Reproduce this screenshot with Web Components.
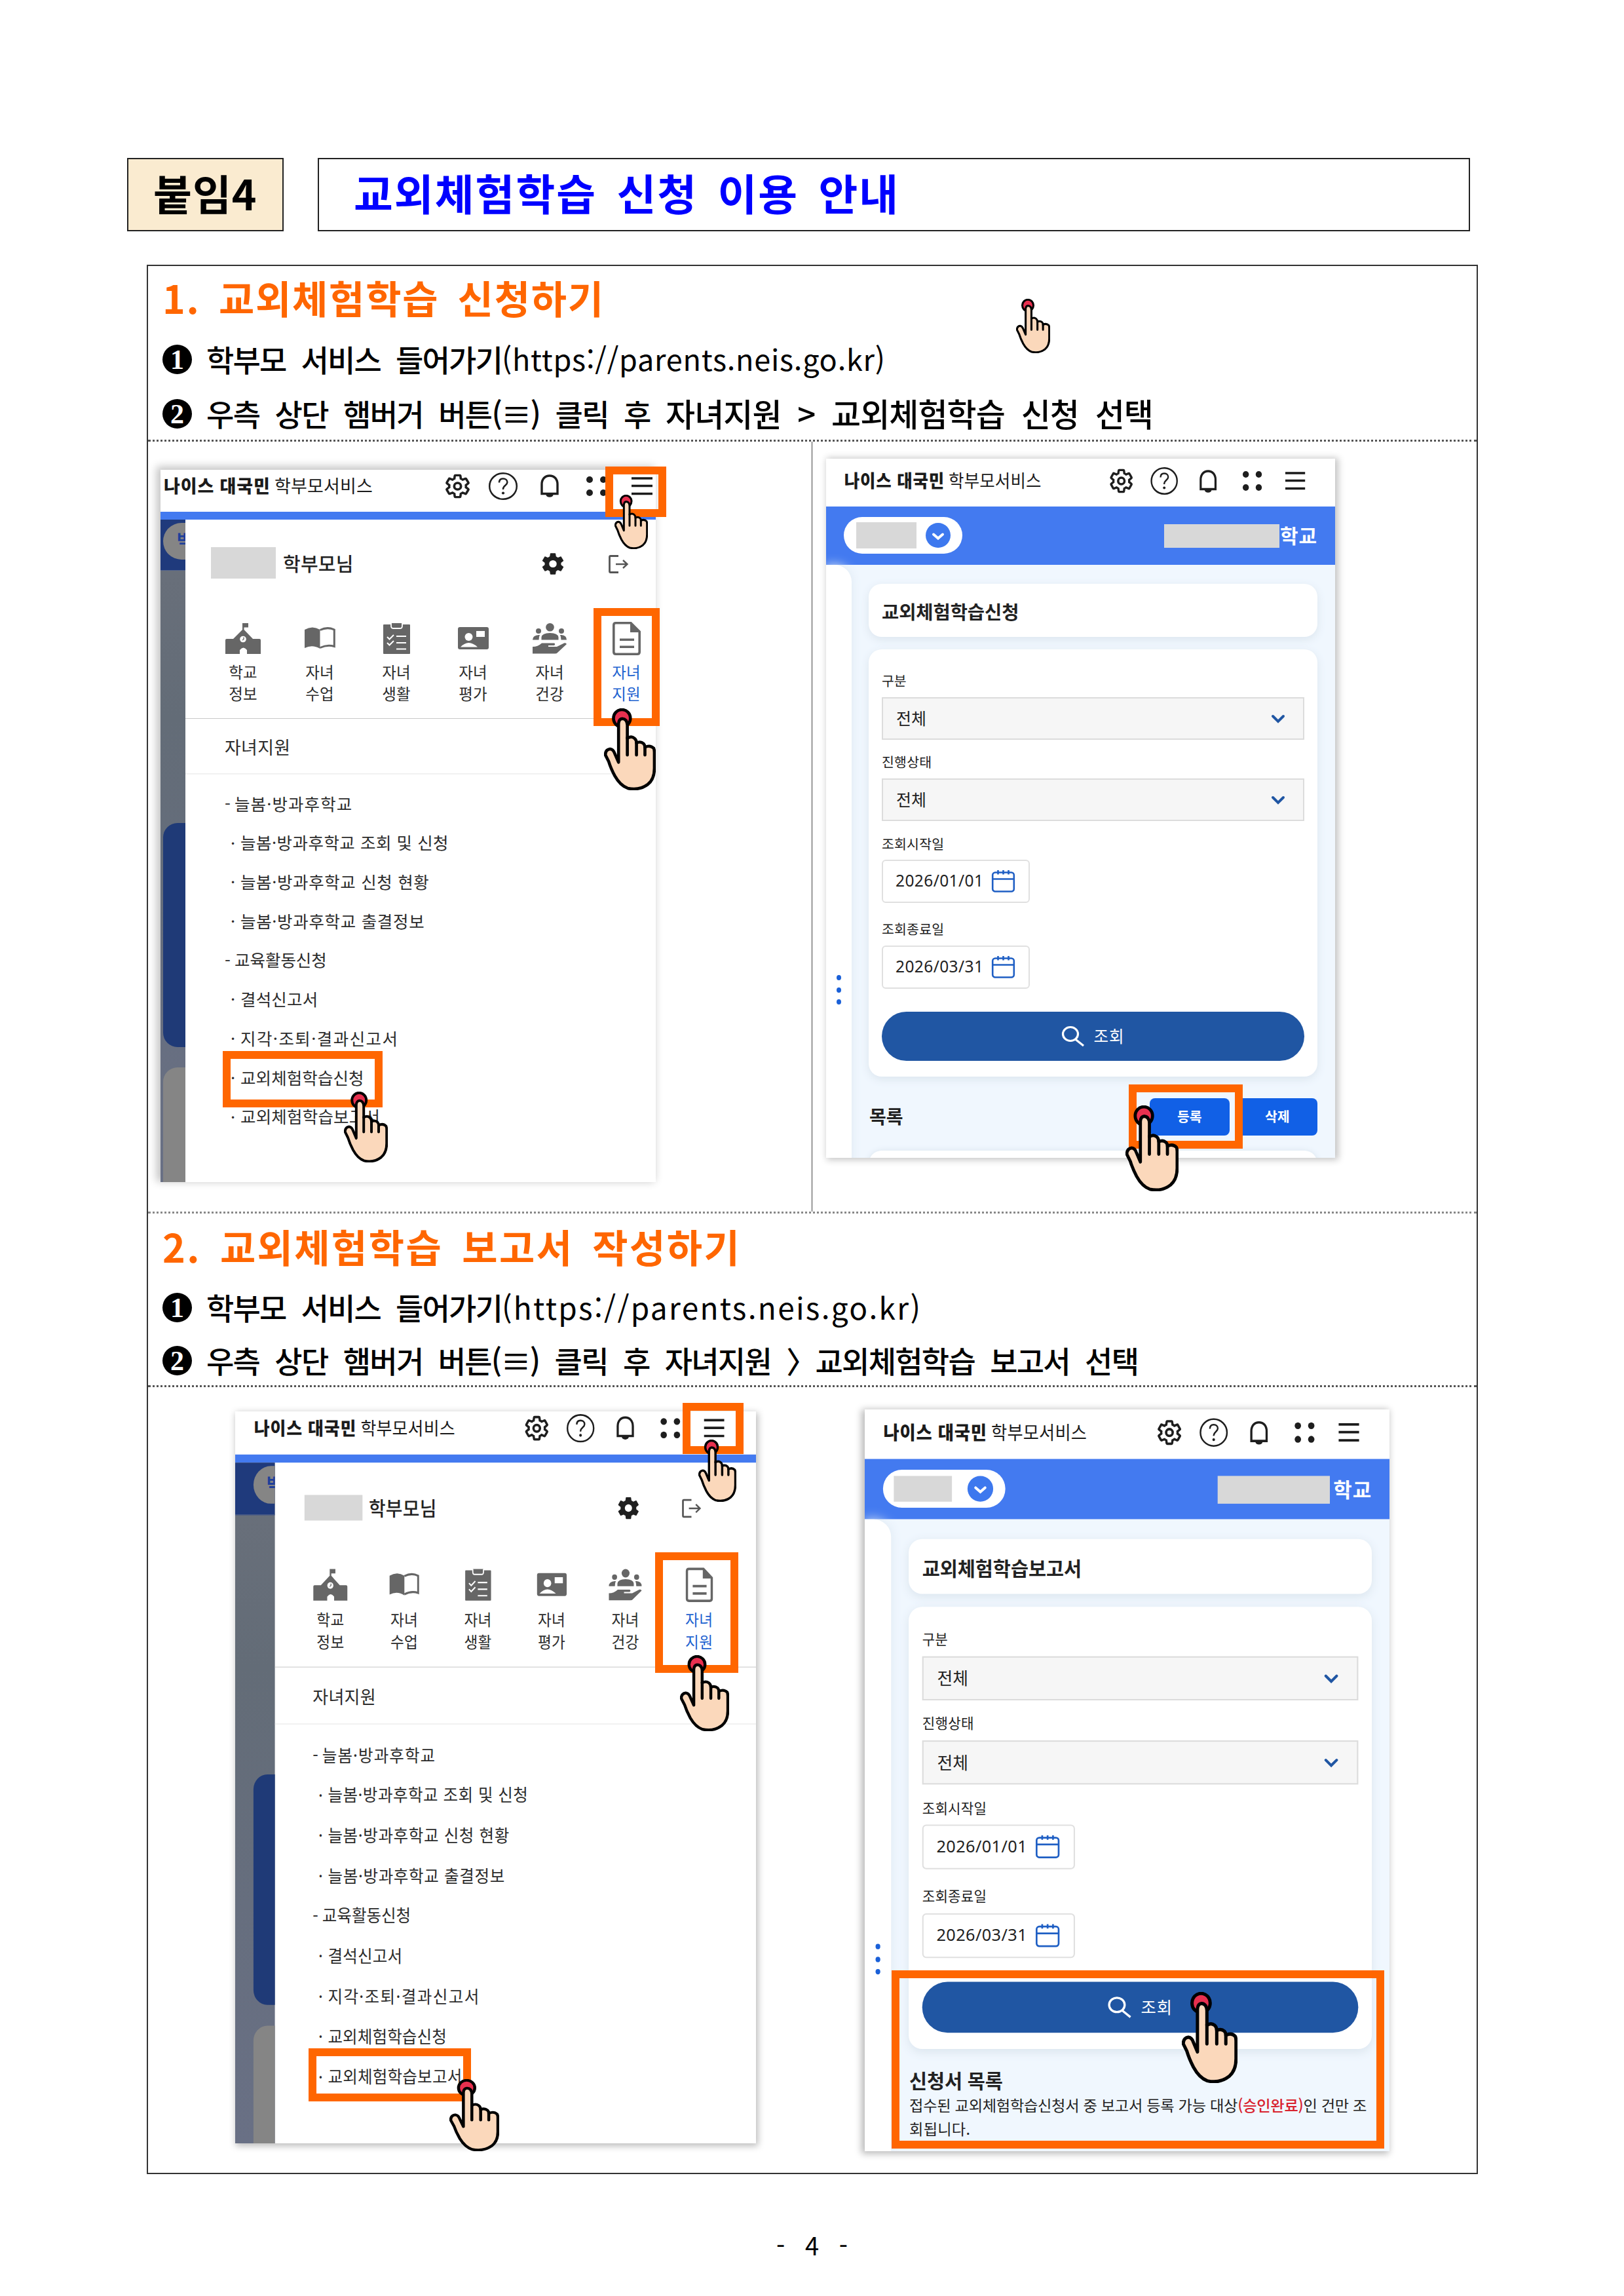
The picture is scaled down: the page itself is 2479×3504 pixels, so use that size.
<!DOCTYPE html>
<html lang="ko">
<head>
<meta charset="utf-8">
<title>교외체험학습 신청 이용 안내</title>
<style>
    * {
        box-sizing: border-box;
    }

    body {
        margin: 0;
        position: relative;
        width: 2479px;
        height: 3504px;
        overflow: hidden;
        background: #fff;
        color: #000;
        font-family: "Noto Sans CJK KR", "Noto Sans", sans-serif;
    }
</style>
</head>
<body>
    <guide-page></guide-page>

<script>
// Text on one line, spaced out (or in) to fill the given width.
class FitText extends HTMLElement {
    constructor() {
        super();
        this.shadowDOM = this.attachShadow({ mode: "open" });
        this.shadowDOM.innerHTML = `
            <style>
                :host {
                    display: block;
                    flex: none;
                }

                span {
                    display: inline-block;
                    position: relative;
                    top: var(--lift, -0.05em);
                    white-space: pre;
                }
            </style>
            <span><slot></slot></span>`;
    }

    connectedCallback() {
        const width = parseFloat(this.getAttribute("width"));
        const span = this.shadowDOM.querySelector("span");
        if (this.hasAttribute("size")) {
            this.style.fontSize = this.getAttribute("size") + "px";
        }
        if (width) {
            const count = [...this.textContent].length;
            span.style.letterSpacing = (width - span.offsetWidth) / count + "px";
            this.style.width = width + "px";
        }
    }
}

customElements.define("fit-text", FitText);

const GEAR = "M19.14 12.94c.04-.3.06-.61.06-.94 0-.32-.02-.64-.07-.94l2.03-1.58c.18-.14.23-.41.12-.61l-1.92-3.32c-.12-.22-.37-.29-.59-.22l-2.39.96c-.5-.38-1.03-.7-1.62-.94l-.36-2.54c-.04-.24-.24-.41-.48-.41h-3.84c-.24 0-.43.17-.47.41l-.36 2.54c-.59.24-1.13.57-1.62.94l-2.39-.96c-.22-.08-.47 0-.59.22L2.74 8.87c-.12.21-.08.47.12.61l2.03 1.58c-.05.3-.09.63-.09.94s.02.64.07.94l-2.03 1.58c-.18.14-.23.41-.12.61l1.92 3.32c.12.22.37.29.59.22l2.39-.96c.5.38 1.03.7 1.62.94l.36 2.54c.05.24.24.41.48.41h3.84c.24 0 .44-.17.47-.41l.36-2.54c.59-.24 1.13-.56 1.62-.94l2.39.96c.22.08.47 0 .59-.22l1.92-3.32c.12-.22.07-.47-.12-.61l-2.01-1.58z";

// name: [width, height, viewBox, drawing]
const ICONS = {
    "gear-line": [37, 36, "1.6 1.6 20.8 20.8", `<path d="${GEAR}" fill="none" stroke="#1e1e1e" stroke-width="2"/><circle cx="12" cy="12" r="2.9" fill="none" stroke="#1e1e1e" stroke-width="2.1"/>`],
    "gear": [34, 33, "2.2 2.2 19.6 19.6", `<path d="${GEAR}" fill="#1f1f1f"/><circle cx="12" cy="12" r="3.3" fill="#fff"/>`],
    "help": [44, 42, "0 0 44 42", `<g fill="none" stroke="#1e1e1e"><ellipse cx="22" cy="21" rx="20.8" ry="19.8" stroke-width="2.5"/><path d="M16 15.5c0-4 2.6-6 6-6s6.4 2 6.4 5.6c0 4.4-6.4 5-6.4 10v.8" stroke-width="2.5"/></g><circle cx="22" cy="31.5" r="2.1" fill="#1e1e1e"/>`],
    "bell": [30, 35, "0 0 30 35", `<path d="M3 29.5V15C3 7 8 2 15 2s12 5 12 13v14.5z" fill="none" stroke="#1e1e1e" stroke-width="3.4"/><path d="M9.5 31h11a5.5 3.8 0 0 1-11 0z" fill="#1e1e1e"/>`],
    "dots": [31, 30, "0 0 31 30", `<g fill="#1e1e1e"><circle cx="5" cy="5" r="5"/><circle cx="26" cy="5" r="5"/><circle cx="5" cy="25" r="5"/><circle cx="26" cy="25" r="5"/></g>`],
    "menu": [32, 28, "0 0 32 28", `<path d="M0 2h32M0 13.5h32M0 25.5h32" stroke="#1b1b1b" stroke-width="3.6"/>`],
    "logout": [30, 28, "0 0 30 28", `<g fill="none" stroke="#555"><path d="M15 1.5H3Q1.5 1.5 1.5 3v22q0 1.5 1.5 1.5h12" stroke-width="2.8"/><path d="M11 14h17M22 8l6.5 6-6.5 6" stroke-width="2.4"/></g>`],
    "school": [54, 47, "0 0 54 47", `<path d="M26 0h9v6.5h-6.5V10L42 24h10q2 0 2 2v21H33V41q-5.5-7-11 0v6H0V26q0-2 2-2h10L26 10z" fill="#666"/><circle cx="27" cy="24.5" r="4.8" fill="#fff"/><path d="M28 21.5v3l-2 1.5" fill="none" stroke="#666" stroke-width="1.3"/>`],
    "book": [47, 34, "0 0 47 34", `<path d="M0 4Q12-3 23.5 4v29Q12 26 0 32z" fill="#666"/><path d="M23.5 4.5Q35-1 45.3 4v25.5Q35 26 23.5 31.5" fill="none" stroke="#666" stroke-width="3"/>`],
    "check": [41, 47, "0 0 41 47", `<path d="M1 2h39q1 0 1 1v43q0 1-1 1H1q-1 0-1-1V3q0-1 1-1z" fill="#666"/><path d="M12 0v4q0 4 3 4h11q3 0 3-4V0" fill="#666" stroke="#fff" stroke-width="1.8"/><path d="M6 21l3.5 3.5L16 18M6 30l3.5 3.5L16 27M20 20h15M20 30h15M20 39.5h15" fill="none" stroke="#fff" stroke-width="2"/>`],
    "card": [47, 34, "0 0 47 34", `<rect width="47" height="34" rx="3" fill="#666"/><circle cx="16.5" cy="15" r="6" fill="#fff"/><path d="M4 30.5q12-13 26 0zM28 6h13v9H28z" fill="#fff"/>`],
    "care": [52, 47, "0 0 52 47", `<g fill="#666"><circle cx="26.5" cy="6.3" r="6.3"/><circle cx="9" cy="12" r="4"/><circle cx="44" cy="12" r="4"/><path d="M13.5 25.5v-4q1-6.5 13-6.5t13 6.5v4zM0 25.5q0-7 9.5-7.5h1.5q-1.5 3-1.5 7.5zM52 25.5q0-7-8-7.5h-2q1.5 3 1.5 7.5zM0 36q8 0 14-5.5h19q2.5 1.5 0 3.5h-9v2h13L48 30.5q3-.8 4 1.5L38 45q-1 1.5-4 1.5H0z"/></g>`],
    "doc": [43, 51, "0 0 43 51", `<path d="M28 1.8H5Q1.8 1.8 1.8 5v41q0 3.2 3.2 3.2h33q3.2 0 3.2-3.2V15z" fill="none" stroke="#666" stroke-width="3.6"/><path d="M27 1l15.5 15H27zM11 25.5h22v3.6H11zM11 36.5h22v3.6H11z" fill="#666"/>`],
    "chevron": [22, 14, "0 0 22 14", `<path d="M3 3l8 8 8-8" fill="none" stroke="#2056a3" stroke-width="4" stroke-linecap="round"/>`],
    "round-chevron": [38, 38, "0 0 38 38", `<circle cx="19" cy="19" r="19" fill="#3d78ee"/><path d="M12 17.5l7 6 7-6" fill="none" stroke="#fff" stroke-width="4" stroke-linecap="round"/>`],
    "calendar": [35, 34, "0 0 35 34", `<g fill="none" stroke="#1f5fc4" stroke-width="2.6"><rect x="1.2" y="3.5" width="32.6" height="29" rx="4"/><path d="M1 13.5h33M9.5 0v6.5M17.5 0v6.5M25.5 0v6.5"/></g>`],
    "search": [34, 31, "0 0 34 31", `<g fill="none" stroke="#fff" stroke-width="3.2"><ellipse cx="13" cy="12" rx="11.5" ry="10.5"/><path d="M20.5 20L33 30"/></g>`]
};

class UiIcon extends HTMLElement {
    constructor() {
        super();
        this.shadowDOM = this.attachShadow({ mode: "open" });
    }

    connectedCallback() {
        const [width, height, box, drawing] = ICONS[this.getAttribute("name")];
        this.shadowDOM.innerHTML = `
            <style>
                :host { display: block; flex: none; width: ${width}px; height: ${height}px; }
                svg { display: block; overflow: visible; }
            </style>
            <svg width="${width}" height="${height}" viewBox="${box}" preserveAspectRatio="none">${drawing}</svg>`;
    }
}

customElements.define("ui-icon", UiIcon);

// Pointing hand, laid over the page. rect="x y width height"
class TapHand extends HTMLElement {
    constructor() {
        super();
        this.shadowDOM = this.attachShadow({ mode: "open" });
    }

    connectedCallback() {
        const [x, y, w, h] = this.getAttribute("rect").split(" ");
        this.shadowDOM.innerHTML = `
            <style>
                :host { position: absolute; left: ${x}px; top: ${y}px; }
                svg { display: block; }
            </style>
            <svg width="${w}" height="${h}" viewBox="0 0 153 246" preserveAspectRatio="none">
                <ellipse cx="53" cy="30" rx="25" ry="26" fill="#e8304f" stroke="#000" stroke-width="9"/>
                <path d="M43 162V46Q44 32 54 31Q68 32 69 50V90Q80 82 90 90Q96 95 96 104Q108 98 117 106Q121 110 121 117Q136 109 147 120Q149 125 149 132V180Q149 212 130 228Q104 248 70 240Q48 232 32 203Q20 180 14 160L4 140Q4 124 18 122Q27 123 31 134Z"
                    fill="#fbd8bb" stroke="#000" stroke-width="9" stroke-linejoin="round"/>
                <path d="M69 88V140M96 102V140M121 116V140" stroke="#000" stroke-width="9" stroke-linecap="round"/>
            </svg>`;
    }
}

customElements.define("tap-hand", TapHand);

// Orange frame, laid over the page. rect="x y width height"
class MarkBox extends HTMLElement {
    constructor() {
        super();
        this.shadowDOM = this.attachShadow({ mode: "open" });
    }

    connectedCallback() {
        const [x, y, w, h] = this.getAttribute("rect").split(" ");
        this.shadowDOM.innerHTML = `
            <style>
                :host {
                    position: absolute;
                    box-sizing: border-box;
                    left: ${x}px;
                    top: ${y}px;
                    width: ${w}px;
                    height: ${h}px;
                    border: 12px solid #ff6600;
                }
            </style>`;
    }
}

customElements.define("mark-box", MarkBox);

class AppHeader extends HTMLElement {
    constructor() {
        super();
        this.shadowDOM = this.attachShadow({ mode: "open" });
        this.shadowDOM.innerHTML = `
            <style>
                :host {
                    display: grid;
                    box-sizing: border-box;
                    grid-template-columns: 169px 261px 37px 29px 44px 34px 30px 41px 31px 38px 32px;
                    width: 755px;
                    padding-left: 5px;
                    align-items: center;
                    color: #1b1b1b;
                    transform-origin: 0 0;
                }

                ui-icon {
                    justify-self: center;
                }
            </style>
            <fit-text size="27" width="163" style="font-weight: 900">나이스 대국민</fit-text>
            <fit-text size="27" width="150">학부모서비스</fit-text>
            <ui-icon name="gear-line"></ui-icon><i></i>
            <ui-icon name="help"></ui-icon><i></i>
            <ui-icon name="bell"></ui-icon><i></i>
            <ui-icon name="dots"></ui-icon><i></i>
            <ui-icon name="menu"></ui-icon>`;
    }
}

customElements.define("app-header", AppHeader);

const TILES = [
    ["school", "학교", "정보"],
    ["book", "자녀", "수업"],
    ["check", "자녀", "생활"],
    ["card", "자녀", "평가"],
    ["care", "자녀", "건강"],
    ["doc", "자녀", "지원"]
];

const MENU = [
    ["-", "늘봄·방과후학교", 180],
    ["·", "늘봄·방과후학교 조회 및 신청", 318],
    ["·", "늘봄·방과후학교 신청 현황", 288],
    ["·", "늘봄·방과후학교 출결정보", 281],
    ["-", "교육활동신청", 141],
    ["·", "결석신고서", 118],
    ["·", "지각·조퇴·결과신고서", 241],
    ["·", "교외체험학습신청", 189],
    ["·", "교외체험학습보고서", 213]
];

class MenuScreen extends HTMLElement {
    constructor() {
        super();
        this.shadowDOM = this.attachShadow({ mode: "open" });
    }

    connectedCallback() {
        const tiles = TILES.map(([icon, a, b]) => `
            <div class="tile">
                <div class="pic"><ui-icon name="${icon}"></ui-icon></div>
                <fit-text size="23.5" width="43.5">${a}</fit-text>
                <fit-text size="23.5" width="43.5">${b}</fit-text>
            </div>`).join("");
        const items = MENU.map(([mark, text, width]) => `
            <li class="${mark === "-" ? "top" : ""}"><b>${mark}</b><fit-text width="${width}">${text}</fit-text></li>`).join("");

        this.shadowDOM.innerHTML = `
            <style>
                * {
                    box-sizing: border-box;
                }

                :host {
                    --pad: 0px;
                    display: block;
                    overflow: hidden;
                    color: #2c2c2c;
                }

                .screen {
                    width: var(--w);
                    height: 1088px;
                    background: #fff;
                    transform-origin: 0 0;
                    transform: scale(var(--sx, 1), var(--sy, 1));
                }

                app-header {
                    height: 49px;
                    margin-left: var(--pad);
                }

                .bar {
                    height: 12px;
                    margin-top: 15px;
                    background: #437af0;
                }

                .body {
                    display: grid;
                    grid-template-columns: calc(var(--pad) + 38px) 1fr;
                    height: 1012px;
                }

                .rail {
                    display: flex;
                    flex-direction: column;
                    overflow: hidden;
                    background: linear-gradient(#6a707b, #636c77 30%, #697085);
                }

                .rail header {
                    height: 78px;
                    flex: none;
                    padding: 5px 0 0 calc(var(--pad) + 4px);
                    background: #1f3a7c;
                    border-bottom: 1px solid #55658c;
                }

                .pill {
                    width: 120px;
                    height: 56px;
                    padding-left: 21px;
                    border-radius: 28px;
                    background: #858585;
                    color: #1f3f9a;
                    font-size: 27px;
                    font-weight: 700;
                    line-height: 52px;
                }

                .card {
                    flex: none;
                    width: 200px;
                    height: 342px;
                    margin: 385px 0 0 calc(var(--pad) + 4px);
                    border-radius: 22px;
                    background: #1f3a77;
                }

                .card.gray {
                    margin-top: 31px;
                    background: #858585;
                }

                .panel {
                    overflow: hidden;
                }

                .user {
                    display: grid;
                    grid-template-columns: 149px 395px 34px 68px 30px;
                    align-items: center;
                    height: 135px;
                    color: #222;
                    font-weight: 500;
                }

                .mask {
                    margin: var(--mask-margin, 0 0 3px 39px);
                    width: var(--mask-w, 99px);
                    height: var(--mask-h, 48px);
                    background: #d8d8d8;
                }

                .tiles {
                    display: flex;
                    height: 169px;
                    padding-left: 29.5px;
                    border-bottom: 1.5px solid #c8c8c8;
                }

                .tile {
                    flex: none;
                    width: 117px;
                    padding-top: 21px;
                    display: flex;
                    flex-direction: column;
                    align-items: center;
                    line-height: 33px;
                }

                .tile:last-child {
                    color: #1d62d0;
                }

                .pic {
                    display: flex;
                    align-items: center;
                    height: 50px;
                    margin-bottom: 11px;
                }

                h3 {
                    margin: 0;
                    height: 85px;
                    padding-left: 60px;
                    border-bottom: 2px solid #f1f1f1;
                    font-weight: 400;
                    line-height: 88px;
                }

                ul {
                    margin: 0;
                    padding: 15px 0 0 69px;
                    list-style: none;
                    font-size: 25.5px;
                }

                li {
                    display: flex;
                    height: 59.7px;
                    line-height: 59px;
                }

                li b {
                    width: 15px;
                    font-weight: 400;
                    line-height: 58px;
                }

                li.top {
                    margin-left: -9px;
                }
            </style>
            <div class="screen">
                <app-header></app-header>
                <div class="bar"></div>
                <div class="body">
                    <div class="rail">
                        <header><div class="pill">박</div></header>
                        <div class="card"></div>
                        <div class="card gray"></div>
                    </div>
                    <div class="panel">
                        <div class="user">
                            <div class="mask"></div>
                            <fit-text size="29" width="108">학부모님</fit-text>
                            <ui-icon name="gear"></ui-icon><i></i>
                            <ui-icon name="logout"></ui-icon>
                        </div>
                        <div class="tiles">${tiles}</div>
                        <h3><fit-text size="27" width="100">자녀지원</fit-text></h3>
                        <ul>${items}</ul>
                    </div>
                </div>
            </div>`;
    }
}

customElements.define("menu-screen", MenuScreen);

class FormScreen extends HTMLElement {
    constructor() {
        super();
        this.shadowDOM = this.attachShadow({ mode: "open" });
    }

    connectedCallback() {
        const title = this.getAttribute("heading");
        this.shadowDOM.innerHTML = `
            <style>
                * {
                    box-sizing: border-box;
                }

                :host {
                    display: block;
                    overflow: hidden;
                    color: #222;
                }

                .screen {
                    width: 777px;
                    height: 1094px;
                    background: #fff;
                    transform-origin: 0 0;
                    transform: scale(var(--sx, 1), var(--sy, 1));
                }

                app-header {
                    height: 68px;
                    margin-left: 23px;
                    transform: scaleX(0.943);
                }

                .bar {
                    display: flex;
                    align-items: center;
                    justify-content: space-between;
                    height: 89px;
                    margin-top: 5px;
                    padding: 0 27px 1px;
                    background: #437af0;
                }

                .pill {
                    display: flex;
                    align-items: center;
                    justify-content: space-between;
                    width: 181px;
                    height: 56px;
                    padding: 0 18px 0 var(--m1-x, 19px);
                    border-radius: 28px;
                    background: #fff;
                }

                .mask {
                    width: 92px;
                    height: 40px;
                    background: #d8d8d8;
                }

                .pill .mask {
                    width: var(--m1-w, 92px);
                    height: var(--m1-h, 40px);
                }

                .school {
                    display: flex;
                    align-items: center;
                    color: #fff;
                    font-weight: 700;
                }

                .school .mask {
                    width: var(--m2-w, 176px);
                    height: var(--m2-h, 36px);
                    margin: 2px var(--m2-gap, 1px) 0 0;
                }

                .body {
                    display: grid;
                    grid-template-columns: 39px 1fr;
                    height: 932px;
                    background: #f0f7fe;
                }

                .drawer {
                    display: flex;
                    flex-direction: column;
                    align-items: center;
                    gap: 11.5px;
                    padding-top: 626px;
                    border-radius: 0 26px 0 0;
                    background: #fff;
                    box-shadow: 0 0 16px #dde8f3;
                }

                .drawer i {
                    width: 7px;
                    height: 8px;
                    border-radius: 50%;
                    background: #1a60d8;
                    margin-bottom: -1px;
                }

                .main {
                    padding: 29px 27px 0 26px;
                }

                .card {
                    border-radius: 20px;
                    background: #fff;
                    box-shadow: 0 4px 14px #dbe5ee;
                }

                .title {
                    height: 81px;
                    padding-left: 20px;
                    line-height: 85px;
                    font-weight: 600;
                }

                .form {
                    height: 652px;
                    margin-top: 19px;
                    padding: 30px 20px 0;
                }

                label {
                    display: flex;
                    align-items: center;
                    height: 43px;
                    padding-bottom: 6px;
                    font-size: 20.5px;
                }

                .select {
                    display: flex;
                    align-items: center;
                    justify-content: space-between;
                    height: 65px;
                    padding: 0 27px 0 20px;
                    border: 2px solid #dcdcdc;
                    background: #f6f6f6;
                }

                .date {
                    display: flex;
                    align-items: center;
                    width: 226px;
                    height: 66px;
                    padding-left: 19px;
                    border: 2px solid #e0e0e0;
                    border-radius: 6px;
                    font-family: "Noto Sans", sans-serif;
                }

                .date ui-icon {
                    margin-left: 13px;
                }

                button {
                    display: flex;
                    align-items: center;
                    justify-content: center;
                    gap: 15px;
                    width: 100%;
                    height: 75px;
                    margin-top: 35px;
                    padding: 0;
                    border: 0;
                    border-radius: 38px;
                    background: #2056a3;
                    color: #fff;
                    font-family: inherit;
                }
            </style>
            <div class="screen">
                <app-header></app-header>
                <div class="bar">
                    <div class="pill"><div class="mask"></div><ui-icon name="round-chevron"></ui-icon></div>
                    <div class="school"><div class="mask"></div><fit-text size="30" width="57">학교</fit-text></div>
                </div>
                <div class="body">
                    <div class="drawer"><i></i><i></i><i></i></div>
                    <div class="main">
                        <div class="card title"><fit-text size="28.5" width="${title.length * 26.2}">${title}</fit-text></div>
                        <div class="card form">
                            <label><fit-text width="38">구분</fit-text></label>
                            <div class="select"><fit-text size="25" width="46">전체</fit-text><ui-icon name="chevron"></ui-icon></div>
                            <label style="height: 59px; padding-top: 14px; padding-bottom: 4px"><fit-text width="76">진행상태</fit-text></label>
                            <div class="select"><fit-text size="25" width="46">전체</fit-text><ui-icon name="chevron"></ui-icon></div>
                            <label style="height: 59px; padding-top: 14px; padding-bottom: 3px"><fit-text width="95">조회시작일</fit-text></label>
                            <div class="date"><fit-text size="24.5" width="134">2026/01/01</fit-text><ui-icon name="calendar"></ui-icon></div>
                            <label style="height: 65px; padding-top: 19px; padding-bottom: 3px"><fit-text width="95">조회종료일</fit-text></label>
                            <div class="date"><fit-text size="24.5" width="134">2026/03/31</fit-text><ui-icon name="calendar"></ui-icon></div>
                            <button><ui-icon name="search"></ui-icon><fit-text size="24.5" width="47">조회</fit-text></button>
                        </div>
                        <slot></slot>
                    </div>
                </div>
            </div>`;
    }
}

customElements.define("form-screen", FormScreen);

// List toolbar under the search form, with the top of the next card.
class ListBar extends HTMLElement {
    constructor() {
        super();
        this.shadowDOM = this.attachShadow({ mode: "open" });
        this.shadowDOM.innerHTML = `
            <style>
                :host {
                    display: block;
                    margin-top: 33px;
                }

                .row {
                    display: flex;
                    align-items: center;
                    height: 57px;
                    gap: 12px;
                    padding-left: 1px;
                    font-weight: 700;
                }

                .row > fit-text {
                    margin-right: auto;
                }

                .btn {
                    display: flex;
                    align-items: center;
                    justify-content: center;
                    width: 122px;
                    height: 57px;
                    border-radius: 8px;
                    background: #1160e6;
                    color: #fff;
                }

                .next {
                    height: 60px;
                    margin-top: 23px;
                    border-radius: 20px;
                    background: #fff;
                    box-shadow: 0 0 10px #dbe5ee;
                }
            </style>
            <div class="row">
                <fit-text size="28" width="52">목록</fit-text>
                <div class="btn"><fit-text size="20.5" width="38">등록</fit-text></div>
                <div class="btn"><fit-text size="20.5" width="38">삭제</fit-text></div>
            </div>
            <div class="next"></div>`;
    }
}

customElements.define("list-bar", ListBar);

class ReportNote extends HTMLElement {
    constructor() {
        super();
        this.shadowDOM = this.attachShadow({ mode: "open" });
        this.shadowDOM.innerHTML = `
            <style>
                :host {
                    display: block;
                    margin: 24px 0 0 1px;
                    font-size: 22.5px;
                    line-height: 35px;
                }

                h4 {
                    margin: 0;
                    height: 42px;
                    line-height: 46px;
                }

                .line {
                    height: 35px;
                }

                em {
                    color: #d8232f;
                    font-style: normal;
                    font-weight: 500;
                }
            </style>
            <h4><fit-text size="28.5" width="138">신청서 목록</fit-text></h4>
            <div class="line"><fit-text width="676">접수된 교외체험학습신청서 중 보고서 등록 가능 대상<em>(승인완료)</em>인 건만 조</fit-text></div>
            <div class="line"><fit-text width="90">회됩니다.</fit-text></div>`;
    }
}

customElements.define("report-note", ReportNote);

// Section heading with its two numbered steps.
class StepIntro extends HTMLElement {
    constructor() {
        super();
        this.shadowDOM = this.attachShadow({ mode: "open" });
        this.shadowDOM.innerHTML = `
            <style>
                :host {
                    --lift: -0.085em;
                    display: block;
                    padding: 6px 0 0 22px;
                    border-bottom: 3px dotted #555;
                    font-size: 46px;
                    font-weight: 500;
                }

                ::slotted(*) {
                    display: flex;
                    align-items: center;
                    margin: 0;
                }
            </style>
            <slot></slot>`;
    }
}

customElements.define("step-intro", StepIntro);

class StepNumber extends HTMLElement {
    constructor() {
        super();
        this.shadowDOM = this.attachShadow({ mode: "open" });
        this.shadowDOM.innerHTML = `
            <style>
                :host {
                    display: block;
                    flex: none;
                    width: 45px;
                    height: 45px;
                    margin: 0 22px 5px 0;
                    border-radius: 50%;
                    background: #000;
                    color: #fff;
                    font: 700 42px/46px "Liberation Serif", serif;
                    text-align: center;
                }
            </style>
            <slot></slot>`;
    }
}

customElements.define("step-number", StepNumber);

class GuidePage extends HTMLElement {
    constructor() {
        super();
        this.shadowDOM = this.attachShadow({ mode: "open" });
        this.shadowDOM.innerHTML = `
            <style>
                * {
                    box-sizing: border-box;
                }

                :host {
                    display: block;
                    padding-top: 241px;
                }

                .top {
                    --lift: -0.065em;
                    display: flex;
                    gap: 52px;
                    margin-left: 194px;
                    height: 112px;
                    font-size: 65px;
                    font-weight: 700;
                }

                .top div {
                    display: flex;
                    align-items: center;
                    border: 2px solid #222;
                }

                .badge {
                    width: 239px;
                    justify-content: center;
                    background: #faebd0;
                }

                .name {
                    width: 1759px;
                    padding-left: 53px;
                    color: #0000ff;
                }

                .frame {
                    display: grid;
                    grid-template-rows: 268px 1178px 265px 1fr;
                    width: 2032px;
                    height: 2914px;
                    margin: 51px 0 0 224px;
                    border: 2px solid #333;
                }

                .shots {
                    display: grid;
                    grid-template-columns: 1015px 1fr;
                    align-items: start;
                }

                .shots.first {
                    border-bottom: 3px dotted #888;
                    background: linear-gradient(#444, #444) 1013px 0 / 1px 100% no-repeat;
                }

                .page {
                    margin-top: 83px;
                    text-align: center;
                    font: 38px/50px "Noto Sans CJK KR", sans-serif;
                    word-spacing: 20px;
                }
            </style>
            <div class="top">
                <div class="badge"><fit-text size="64" width="159">붙임4</fit-text></div>
                <div class="name"><fit-text width="833" style="word-spacing: 10px">교외체험학습 신청 이용 안내</fit-text></div>
            </div>
            <div class="frame">
                <step-intro>
                    <h2 style="height: 92px; color: #ff6600; font-size: 59px"><fit-text width="675" style="word-spacing: 10px">1. 교외체험학습 신청하기</fit-text></h2>
                    <p style="height: 93px">
                        <step-number>1</step-number>
                        <fit-text width="451" style="word-spacing: 12px">학부모 서비스 들어가기</fit-text><fit-text width="586" size="45" style="font-weight: 400">(https://parents.neis.go.kr)</fit-text>
                    </p>
                    <p style="height: 74px">
                        <step-number>2</step-number>
                        <fit-text width="701" style="word-spacing: 12px">우측 상단 햄버거 버튼(≡) 클릭 후 </fit-text><fit-text size="49" width="744" style="font-weight: 500; word-spacing: 12px">자녀지원 &gt; 교외체험학습 신청 선택</fit-text>
                    </p>
                </step-intro>
                <div class="shots first">
                    <menu-screen style="width: 756px; height: 1087px; margin: 43px 0 0 19px; --w: 757px; box-shadow: -4px -3px 12px 2px #c4c4c4"></menu-screen>
                    <form-screen heading="교외체험학습신청" style="width: 777px; height: 1067px; margin: 26px 0 0 20px; box-shadow: 3px 1px 10px 2px #c4c4c4"><list-bar></list-bar></form-screen>
                </div>
                <step-intro style="padding-top: 8px">
                    <h2 style="height: 92px; color: #ff6600; font-size: 59px"><fit-text width="883" style="word-spacing: 10px">2. 교외체험학습 보고서 작성하기</fit-text></h2>
                    <p style="height: 92px">
                        <step-number>1</step-number>
                        <fit-text width="451" style="word-spacing: 12px">학부모 서비스 들어가기</fit-text><fit-text width="641" size="46" style="font-weight: 400">(https://parents.neis.go.kr)</fit-text>
                    </p>
                    <p style="height: 69px">
                        <step-number>2</step-number>
                        <fit-text width="1422" style="word-spacing: 12px">우측 상단 햄버거 버튼(≡) 클릭 후 자녀지원 〉교외체험학습 보고서 선택</fit-text>
                    </p>
                </step-intro>
                <div class="shots">
                    <menu-screen style="width: 795px; height: 1117px; margin: 37px 0 0 133px; --w: 827px; --pad: 25px; --sx: 0.962; --sy: 1.028; --mask-margin: 0 0 1px 47px; --mask-w: 92px; --mask-h: 38px; box-shadow: 2px 3px 10px 1px #bbb"></menu-screen>
                    <form-screen heading="교외체험학습보고서" style="width: 801px; height: 1132px; margin: 34px 0 0 79px; --sx: 1.032; --sy: 1.035; --m1-x: 16px; --m1-w: 86px; --m1-h: 38px; --m2-w: 166px; --m2-h: 41px; --m2-gap: 5px; box-shadow: -3px 2px 10px 2px #bbb"><report-note></report-note></form-screen>
                </div>
            </div>
            <div class="page">- 4 -</div>

            <tap-hand rect="1551 456 52 83"></tap-hand>

            <mark-box rect="924 712 93 77"></mark-box>
            <mark-box rect="906 928 101 180"></mark-box>
            <mark-box rect="340 1604 244 86"></mark-box>
            <tap-hand rect="938 755 51 83"></tap-hand>
            <tap-hand rect="922 1081 79 125"></tap-hand>
            <tap-hand rect="525 1666 67 108"></tap-hand>

            <mark-box rect="1723 1655 174 98"></mark-box>
            <tap-hand rect="1718 1687 81 131"></tap-hand>

            <mark-box rect="1042 2141 93 78"></mark-box>
            <mark-box rect="1000 2369 127 184"></mark-box>
            <mark-box rect="471 3126 248 81"></mark-box>
            <tap-hand rect="1066 2197 58 95"></tap-hand>
            <tap-hand rect="1038 2526 75 116"></tap-hand>
            <tap-hand rect="686 3173 76 110"></tap-hand>

            <mark-box rect="1361 3007 752 272"></mark-box>
            <tap-hand rect="1804 3040 85 139"></tap-hand>`;
    }
}

customElements.define("guide-page", GuidePage);
</script>
</body>
</html>
